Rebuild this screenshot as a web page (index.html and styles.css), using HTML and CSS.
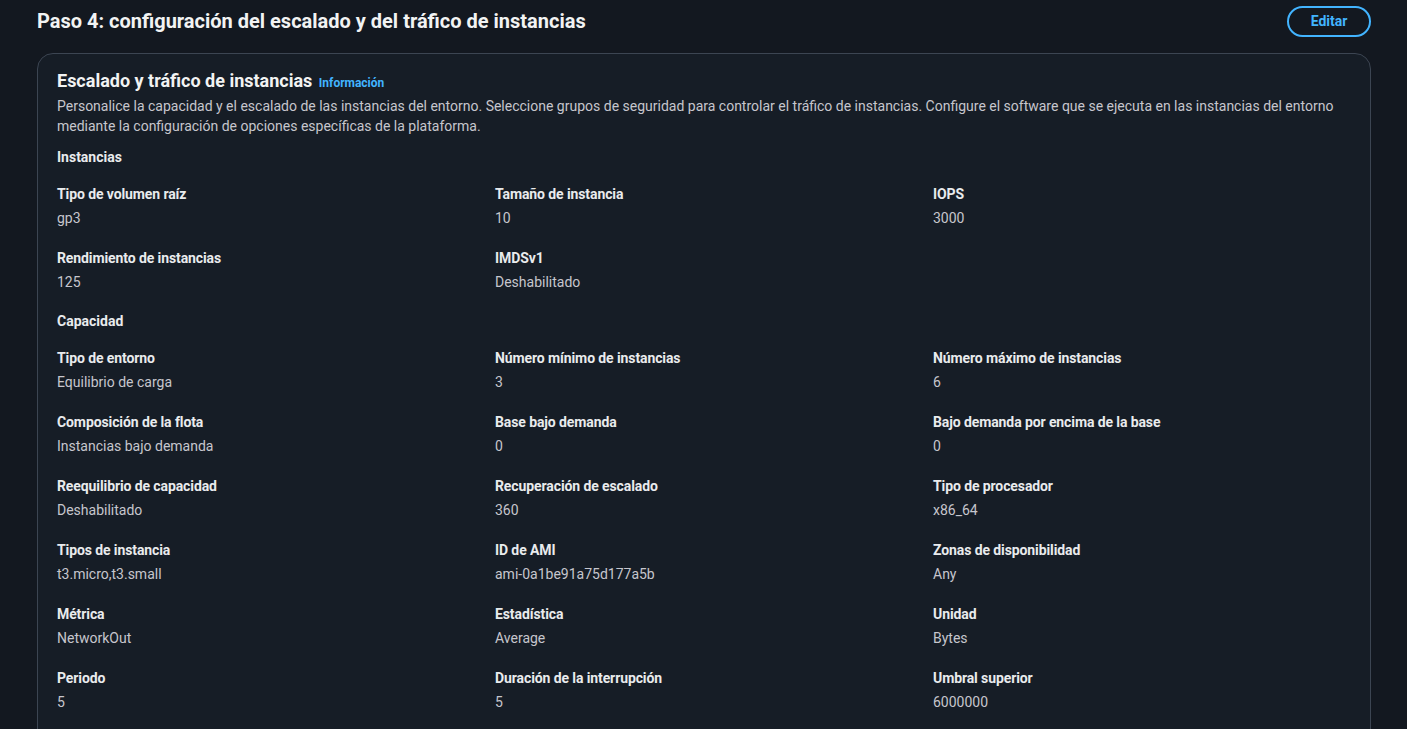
FILE: index.html
```html
<!DOCTYPE html>
<html lang="es">
<head>
<meta charset="utf-8">
<link rel="stylesheet" href="styles.css">
</head>
<body>
<div class="page">
  <div class="step-header">
    <h2 class="step-title">Paso 4: configuración del escalado y del tráfico de instancias</h2>
    <button class="btn-edit">Editar</button>
  </div>
  <div class="card">
    <div class="card-head">
      <h3 class="card-title">Escalado y tráfico de instancias <a class="info">Información</a></h3>
      <p class="card-desc">Personalice la capacidad y el escalado de las instancias del entorno. Seleccione grupos de seguridad para controlar el tráfico de instancias. Configure el software que se ejecuta en las instancias del entorno mediante la configuración de opciones específicas de la plataforma.</p>
    </div>
    <h4 class="section">Instancias</h4>
    <div class="grid">
      <div class="item"><div class="label">Tipo de volumen raíz</div><div class="value">gp3</div></div>
      <div class="item"><div class="label">Tamaño de instancia</div><div class="value">10</div></div>
      <div class="item"><div class="label">IOPS</div><div class="value">3000</div></div>
      <div class="item"><div class="label">Rendimiento de instancias</div><div class="value">125</div></div>
      <div class="item"><div class="label">IMDSv1</div><div class="value">Deshabilitado</div></div>
    </div>
    <h4 class="section">Capacidad</h4>
    <div class="grid">
      <div class="item"><div class="label">Tipo de entorno</div><div class="value">Equilibrio de carga</div></div>
      <div class="item"><div class="label">Número mínimo de instancias</div><div class="value">3</div></div>
      <div class="item"><div class="label">Número máximo de instancias</div><div class="value">6</div></div>
      <div class="item"><div class="label">Composición de la flota</div><div class="value">Instancias bajo demanda</div></div>
      <div class="item"><div class="label">Base bajo demanda</div><div class="value">0</div></div>
      <div class="item"><div class="label">Bajo demanda por encima de la base</div><div class="value">0</div></div>
      <div class="item"><div class="label">Reequilibrio de capacidad</div><div class="value">Deshabilitado</div></div>
      <div class="item"><div class="label">Recuperación de escalado</div><div class="value">360</div></div>
      <div class="item"><div class="label">Tipo de procesador</div><div class="value">x86_64</div></div>
      <div class="item"><div class="label">Tipos de instancia</div><div class="value">t3.micro,t3.small</div></div>
      <div class="item"><div class="label">ID de AMI</div><div class="value">ami-0a1be91a75d177a5b</div></div>
      <div class="item"><div class="label">Zonas de disponibilidad</div><div class="value">Any</div></div>
      <div class="item"><div class="label">Métrica</div><div class="value">NetworkOut</div></div>
      <div class="item"><div class="label">Estadística</div><div class="value">Average</div></div>
      <div class="item"><div class="label">Unidad</div><div class="value">Bytes</div></div>
      <div class="item"><div class="label">Periodo</div><div class="value">5</div></div>
      <div class="item"><div class="label">Duración de la interrupción</div><div class="value">5</div></div>
      <div class="item"><div class="label">Umbral superior</div><div class="value">6000000</div></div>
    </div>
  </div>
</div>
</body>
</html>
```

FILE: styles.css
```css
* { box-sizing: border-box; }
html, body {
  margin: 0;
  padding: 0;
  background: #131820;
  font-family: Roboto, "Open Sans", sans-serif;
  color: #c6c6cd;
  overflow: hidden;
}
.page {
  padding: 6px 36px 0 37px;
}
.step-header {
  display: flex;
  justify-content: space-between;
  align-items: center;
  height: 30px;
  margin-bottom: 17px;
}
.step-title {
  margin: 0;
  font-size: 20px;
  font-weight: 700;
  color: #f2f3f3;
  letter-spacing: 0;
}
.btn-edit {
  width: 84px;
  height: 31px;
  border: 2px solid #42b4ff;
  border-radius: 20px;
  background: transparent;
  color: #42b4ff;
  font-family: inherit;
  font-weight: 700;
  font-size: 14px;
  padding: 0;
}
.card {
  background: #161d26;
  border: 1px solid #3c4552;
  border-radius: 16px;
  padding: 16px 19px 20px;
  min-height: 720px;
}
.card-title {
  margin: 0;
  font-size: 18px;
  font-weight: 700;
  color: #f2f3f3;
  line-height: 22px;
  letter-spacing: 0;
}
.info {
  font-size: 12px;
  color: #42b4ff;
  font-weight: 700;
  margin-left: 2px;
}
.card-desc {
  margin: 2px 0 0;
  font-size: 14px;
  line-height: 20px;
  padding-right: 4px;
}
.section {
  margin: 11px 0 0;
  font-size: 14px;
  line-height: 20px;
  font-weight: 700;
  color: #e9ebed;
}
.grid {
  display: grid;
  grid-template-columns: repeat(3, 1fr);
  column-gap: 20px;
  row-gap: 20px;
  margin-top: 17px;
}
.grid + .section { margin-top: 19px; }
.label {
  font-size: 14px;
  line-height: 20px;
  font-weight: 700;
  color: #e9ebed;
  letter-spacing: -0.1px;
}
.value {
  font-size: 14px;
  line-height: 20px;
  margin-top: 4px;
}
```
